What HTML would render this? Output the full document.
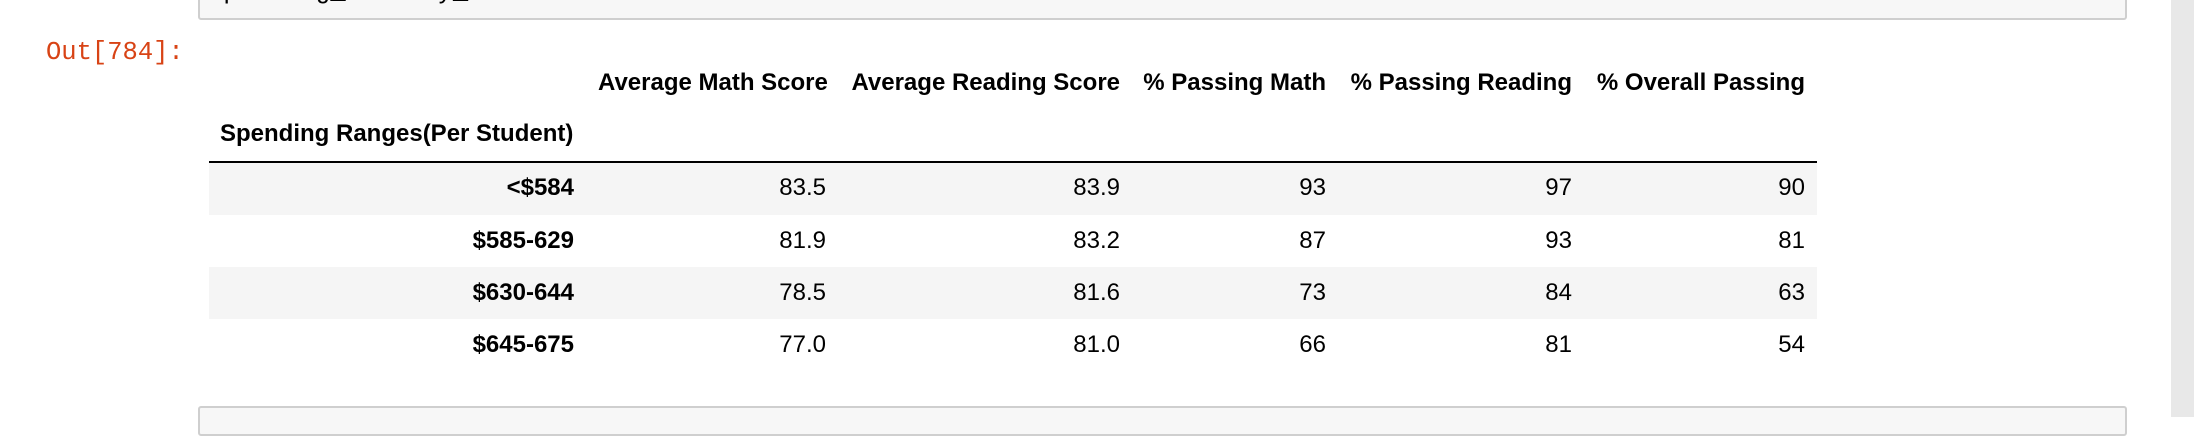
<!DOCTYPE html>
<html><head><meta charset="utf-8">
<style>
html,body{margin:0;padding:0;background:#fff;}
body{width:2194px;height:417px;position:relative;overflow:hidden;font-family:"Liberation Sans",Arial,sans-serif;color:#000;}
.box{position:absolute;left:198px;width:1929px;background:#f7f7f7;border:2px solid #cfcfcf;border-radius:3px;box-sizing:border-box;}
.mono{font-family:"Liberation Mono",monospace;font-size:25.5px;}
.t{position:absolute;font-size:24px;white-space:nowrap;line-height:30px;}
.b{font-weight:bold;}
.band{position:absolute;left:209px;width:1608px;background:#f5f5f5;}
</style></head><body>
<div class="box" style="top:-10px;height:30px;"></div>
<div class="mono" style="position:absolute;left:208px;top:-23px;line-height:30px;color:#000;">spending_summary_</div>
<div class="mono" style="position:absolute;left:46px;top:38px;line-height:30px;color:#d84315;">Out[784]:</div>

<div class="t b" style="left:598px;top:68px;">Average Math Score</div>
<div class="t b" style="right:1074px;top:68px;">Average Reading Score</div>
<div class="t b" style="right:868px;top:68px;">% Passing Math</div>
<div class="t b" style="right:622px;top:68px;">% Passing Reading</div>
<div class="t b" style="right:389px;top:68px;">% Overall Passing</div>
<div class="t b" style="left:220px;top:119px;">Spending Ranges(Per Student)</div>

<div style="position:absolute;left:209px;width:1608px;top:161px;height:2px;background:#000;"></div>
<div class="band" style="top:163px;height:52px;"></div>
<div class="band" style="top:267px;height:52px;"></div>

<div class="t b" style="right:1620px;top:173px;">&lt;$584</div>
<div class="t" style="right:1368px;top:173px;">83.5</div>
<div class="t" style="right:1074px;top:173px;">83.9</div>
<div class="t" style="right:868px;top:173px;">93</div>
<div class="t" style="right:622px;top:173px;">97</div>
<div class="t" style="right:389px;top:173px;">90</div>

<div class="t b" style="right:1620px;top:226px;">$585-629</div>
<div class="t" style="right:1368px;top:226px;">81.9</div>
<div class="t" style="right:1074px;top:226px;">83.2</div>
<div class="t" style="right:868px;top:226px;">87</div>
<div class="t" style="right:622px;top:226px;">93</div>
<div class="t" style="right:389px;top:226px;">81</div>

<div class="t b" style="right:1620px;top:278px;">$630-644</div>
<div class="t" style="right:1368px;top:278px;">78.5</div>
<div class="t" style="right:1074px;top:278px;">81.6</div>
<div class="t" style="right:868px;top:278px;">73</div>
<div class="t" style="right:622px;top:278px;">84</div>
<div class="t" style="right:389px;top:278px;">63</div>

<div class="t b" style="right:1620px;top:330px;">$645-675</div>
<div class="t" style="right:1368px;top:330px;">77.0</div>
<div class="t" style="right:1074px;top:330px;">81.0</div>
<div class="t" style="right:868px;top:330px;">66</div>
<div class="t" style="right:622px;top:330px;">81</div>
<div class="t" style="right:389px;top:330px;">54</div>

<div class="box" style="top:406px;height:30px;"></div>
<div style="position:absolute;left:2171px;top:0;width:23px;height:417px;background:#e8e8e8;"></div>
</body></html>
